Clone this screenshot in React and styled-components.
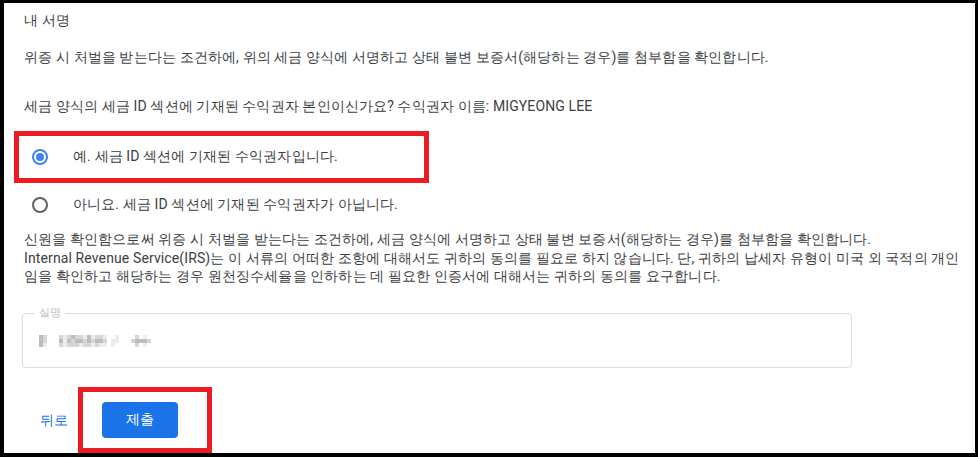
import React from "react";
import styled, { createGlobalStyle } from "styled-components";

const Global = createGlobalStyle`
  html, body { margin: 0; padding: 0; background: #000; }
  body { font-family: Roboto, sans-serif; }
  * { box-sizing: border-box; }
`;

const Frame = styled.div`
  width: 978px;
  height: 457px;
  background: #fff;
  border-style: solid;
  border-color: #000;
  border-width: 3px 3px 4px 4px;
  padding-left: 20px;
  overflow: hidden;
  color: #3c4043;
  font-size: 14px;
  letter-spacing: 0.12px;
`;

const Title = styled.div`
  margin-top: 7px;
  line-height: 20px;
`;

const Text = styled.p`
  margin: ${(p) => p.$top}px 0 0;
  line-height: ${(p) => p.$lh || 20}px;
  width: 940px;
`;

const Options = styled.div`
  margin: 17px 0 0 -8px;
  display: flex;
  flex-direction: column;
`;

const Option = styled.label`
  display: flex;
  align-items: center;
  gap: 25px;
  width: 411px;
  height: 48px;
  padding-left: 16px;
  outline: ${(p) => (p.$marked ? "5px solid #ed1c24" : "none")};
  outline-offset: -3px;
`;

const Radio = styled.span`
  width: 16px;
  height: 16px;
  border-radius: 50%;
  border: 2px solid ${(p) => (p.$on ? "#4285f4" : "#5f6368")};
  display: flex;
  align-items: center;
  justify-content: center;
  flex: none;
  &::after {
    content: "";
    width: 8px;
    height: 8px;
    border-radius: 50%;
    background: ${(p) => (p.$on ? "#4285f4" : "transparent")};
  }
`;

const Field = styled.div`
  position: relative;
  margin: 27px 0 0 -2px;
  width: 830px;
  height: 55px;
  border: 1px solid #dadce0;
  border-radius: 4px;
  display: flex;
  align-items: center;
  padding-left: 16px;
`;

const FloatLabel = styled.span`
  position: absolute;
  top: -8px;
  left: 12px;
  padding: 0 4px;
  background: #fff;
  color: #bdc1c6;
  font-size: 11px;
  line-height: 14px;
`;

const Mosaic = styled.div`
  display: grid;
  grid-template-columns: repeat(29, 4px);
  grid-auto-rows: 4px;
  margin-top: 2px;
`;

const Cell = styled.span`
  background: ${(p) => p.$c};
`;

const Actions = styled.div`
  margin: 19px 0 0 16px;
  display: flex;
  align-items: center;
  gap: 10px;
`;

const BackLink = styled.a`
  color: #1a73e8;
  font-size: 14px;
  line-height: 20px;
  text-decoration: none;
`;

const MarkBox = styled.div`
  width: 134px;
  height: 66px;
  border: 5px solid #ed1c24;
  padding: 10px 0 0 19px;
`;

const SubmitButton = styled.button`
  width: 76px;
  height: 36px;
  border: none;
  border-radius: 4px;
  background: #1a73e8;
  color: #fff;
  font-family: inherit;
  font-size: 14px;
  font-weight: 500;
  letter-spacing: 0.3px;
  cursor: pointer;
`;

const shades = { " ": "transparent", "1": "#ececec", "2": "#d6d6d6", "3": "#bdbdbd" };
const mosaicRows = [
  "32   212322131221  1    2 1  ",
  "32   313233232332 11   23332 ",
  "31   212221221211 1     2 1  ",
];

export default function App() {
  return (
    <>
      <Global />
      <Frame>
        <Title>내 서명</Title>
        <Text $top={17}>
          위증 시 처벌을 받는다는 조건하에, 위의 세금 양식에 서명하고 상태 불변 보증서(해당하는 경우)를 첨부함을 확인합니다.
        </Text>
        <Text $top={29}>
          세금 양식의 세금 ID 섹션에 기재된 수익권자 본인이신가요? 수익권자 이름: MIGYEONG LEE
        </Text>
        <Options>
          <Option $marked>
            <Radio $on />
            예. 세금 ID 섹션에 기재된 수익권자입니다.
          </Option>
          <Option>
            <Radio />
            아니요. 세금 ID 섹션에 기재된 수익권자가 아닙니다.
          </Option>
        </Options>
        <Text $top={1} $lh={18.5}>
          신원을 확인함으로써 위증 시 처벌을 받는다는 조건하에, 세금 양식에 서명하고 상태 불변 보증서(해당하는 경우)를 첨부함을 확인합니다.
          <br />
          Internal Revenue Service(IRS)는 이 서류의 어떠한 조항에 대해서도 귀하의 동의를 필요로 하지 않습니다. 단, 귀하의 납세자 유형이 미국 외 국적의 개인임을 확인하고 해당하는 경우 원천징수세율을 인하하는 데 필요한 인증서에 대해서는 귀하의 동의를 요구합니다.
        </Text>
        <Field>
          <FloatLabel>실명</FloatLabel>
          <Mosaic>
            {mosaicRows.flatMap((row, r) =>
              row.split("").map((ch, c) => <Cell key={`${r}-${c}`} $c={shades[ch]} />)
            )}
          </Mosaic>
        </Field>
        <Actions>
          <BackLink href="#">뒤로</BackLink>
          <MarkBox>
            <SubmitButton>제출</SubmitButton>
          </MarkBox>
        </Actions>
      </Frame>
    </>
  );
}
